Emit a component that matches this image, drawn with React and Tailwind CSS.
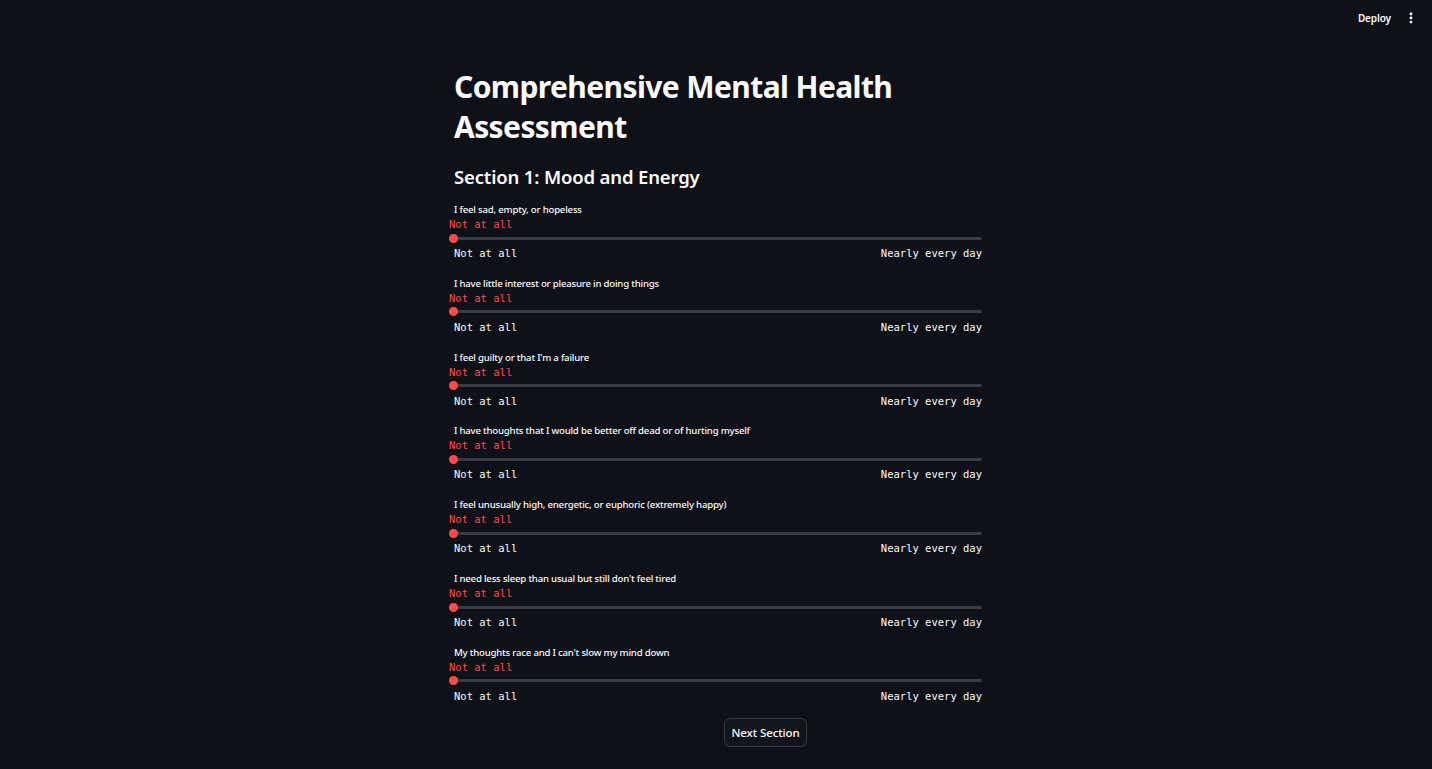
import { EllipsisVertical } from "lucide-react";

const questions = [
  "I feel sad, empty, or hopeless",
  "I have little interest or pleasure in doing things",
  "I feel guilty or that I'm a failure",
  "I have thoughts that I would be better off dead or of hurting myself",
  "I feel unusually high, energetic, or euphoric (extremely happy)",
  "I need less sleep than usual but still don't feel tired",
  "My thoughts race and I can't slow my mind down",
];

const sans = "font-['Noto_Sans',sans-serif]";
const mono = "font-['DejaVu_Sans_Mono',monospace]";

function SliderRow({ label }) {
  return (
    <div className="flex h-[73.83px] flex-col">
      <p className={`${sans} h-[15px] text-[9.6px] font-medium leading-[17px] tracking-[-0.2px] text-[#fafafa]`}>{label}</p>
      <div className={`${mono} -ml-[5px] h-[15px] text-[10.5px] leading-[17px] text-[#ff4b4b]`}>Not at all</div>
      {/* track */}
      <div className="relative flex h-[14px] items-center">
        <div className="h-[3px] w-full rounded-full bg-[#3a3c44]" />
        <div className="absolute -left-[5px] top-[2.5px] h-[9px] w-[9px] rounded-full bg-[#ff4b4b]" />
      </div>
      <div className={`${mono} flex h-[15px] justify-between text-[10.5px] leading-[16px] text-[#fafafa]`}>
        <span>Not at all</span>
        <span>Nearly every day</span>
      </div>
    </div>
  );
}

export default function App() {
  return (
    <div className={`${sans} min-h-screen bg-[#0e1117] text-[#fafafa]`}>
      <header className="flex h-[36px] items-center justify-end gap-[13px] pr-[14px]">
        <span className="text-[10px] font-semibold tracking-[-0.1px]">Deploy</span>
        <EllipsisVertical size={14} strokeWidth={3} />
      </header>

      <main className="mx-auto w-[532px] pl-[4px] pt-[31px]">
        <h1 className="text-[30px] font-bold leading-[40px] tracking-[-0.6px]">
          Comprehensive Mental Health Assessment
        </h1>
        <h3 className="mt-[16px] h-[28px] text-[18.5px] font-semibold leading-[28px] tracking-[-0.15px]">
          Section 1: Mood and Energy
        </h3>
        <div className="mt-[10px]">
          {questions.map((q) => (
            <SliderRow key={q} label={q} />
          ))}
        </div>
        <div className="ml-[270px] mt-[0px]">
          <button className="h-[29px] w-[83px] rounded-[6px] border border-[#393c44] bg-[#12151c] text-[11.5px] font-medium tracking-[-0.1px] text-[#fafafa]">
            Next Section
          </button>
        </div>
      </main>
    </div>
  );
}
